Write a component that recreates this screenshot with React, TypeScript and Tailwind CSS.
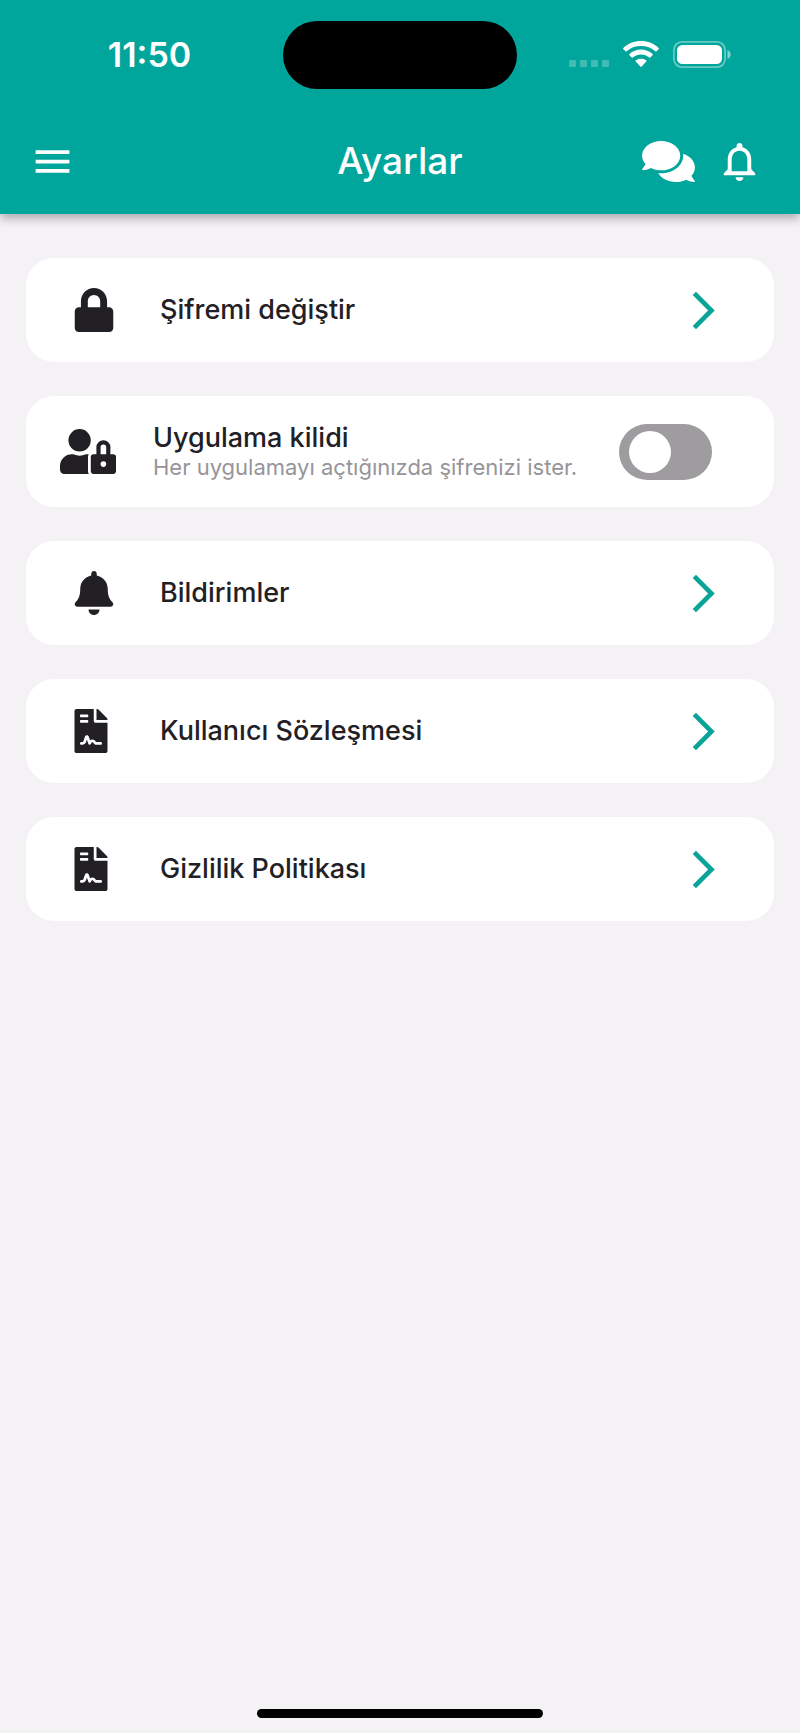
import { useState } from "react";
import type { ReactNode } from "react";
import { FaBell, FaComments, FaFileContract, FaLock, FaUserLock } from "react-icons/fa";
import { MdArrowForwardIos, MdMenu, MdNotificationsNone } from "react-icons/md";

interface LinkRowProps {
  icon: ReactNode;
  label: string;
}

interface SwitchRowProps extends LinkRowProps {
  hint: string;
}

function WifiIcon() {
  return (
    <svg viewBox="0 0 36 26" className="w-9 h-[26px]" fill="currentColor" aria-hidden="true">
      <path d="M18 0C11.2 0 5 2.600 0.400 6.900a0.900 0.900 0 0 0 0 1.300l2.100 2.100a0.900 0.900 0 0 0 1.200 0C7.500 6.900 12.500 5 18 5s10.500 1.900 14.300 5.300a0.900 0.900 0 0 0 1.200 0l2.100-2.100a0.900 0.900 0 0 0 0-1.300C31 2.600 24.800 0 18 0z" />
      <path d="M18 8.600c-4.400 0-8.400 1.600-11.500 4.400a0.900 0.900 0 0 0 0 1.300l2.200 2.200a0.900 0.900 0 0 0 1.200 0c2.200-1.900 5-3 8.100-3s5.900 1.100 8.100 3a0.900 0.900 0 0 0 1.200 0l2.200-2.200a0.900 0.900 0 0 0 0-1.300C26.400 10.200 22.400 8.600 18 8.600z" />
      <path d="M18 17.700c-2 0-3.900.6-5.200 1.600a0.900 0.900 0 0 0 0 1.300l4.500 4.900a0.900 0.900 0 0 0 1.400 0l4.500-4.900a0.900 0.900 0 0 0 0-1.300c-1.300-1-3.200-1.600-5.200-1.600z" />
    </svg>
  );
}

function BatteryIcon() {
  return (
    <svg viewBox="0 0 58 27" className="w-[58px] h-[27px]" fill="none" aria-hidden="true">
      <rect x="0.900" y="0.900" width="51.200" height="25.200" rx="8" stroke="white" strokeOpacity="0.400" strokeWidth="1.800" />
      <rect x="4" y="4" width="45" height="19" rx="5.500" fill="white" />
      <path d="M54.500 9v9c1.900-.8 3.200-2.500 3.200-4.500S56.400 9.800 54.500 9z" fill="white" fillOpacity="0.500" />
    </svg>
  );
}

function StatusBar() {
  return (
    <div className="h-[110px] grid grid-cols-[1fr_auto_1fr] items-center">
      <span className="pl-4 text-center text-[34px] leading-10 font-semibold">11:50</span>
      <div className="w-[234px] h-[68px] rounded-full bg-black" />
      <div className="flex items-center justify-end pr-[69px] pb-0.5">
        <div className="flex gap-[4px] pt-[18px] mr-[14px]">
          {[0, 1, 2, 3].map((dot) => (
            <span key={dot} className="size-[7px] rounded-[1px] bg-white/25" />
          ))}
        </div>
        <div className="flex items-center gap-[14px]">
          <WifiIcon />
          <BatteryIcon />
        </div>
      </div>
    </div>
  );
}

function Header() {
  return (
    <header className="bg-[#00a69c] text-white shadow-[0_4px_10px_rgba(0,0,0,0.32)]">
      <StatusBar />
      <div className="h-[104px] grid grid-cols-[1fr_auto_1fr] items-center pb-0.5">
        <button type="button" aria-label="Menü" className="justify-self-start ml-[30px]">
          <MdMenu className="size-[45px]" />
        </button>
        <h1 className="text-[37px] leading-10 font-medium">Ayarlar</h1>
        <div className="flex items-center justify-end gap-[21px] pr-[37px]">
          <button type="button" aria-label="Mesajlar">
            <FaComments className="w-[53px] h-[47px]" />
          </button>
          <button type="button" aria-label="Bildirimler">
            <MdNotificationsNone className="size-[47px]" />
          </button>
        </div>
      </div>
    </header>
  );
}

function LinkRow({ icon, label }: LinkRowProps) {
  return (
    <button
      type="button"
      className="w-full h-[104px] flex items-center px-12 rounded-[28px] bg-white text-left"
    >
      <span className="w-[86px] shrink-0">{icon}</span>
      <span className="flex-1 text-[27px] leading-[30px] font-medium">{label}</span>
      <MdArrowForwardIos className="size-[45px] text-[#0aa398]" />
    </button>
  );
}

function SwitchRow({ icon, label, hint }: SwitchRowProps) {
  const [enabled, setEnabled] = useState(false);

  return (
    <div className="w-full h-[111px] flex items-center pl-[34px] pr-[62px] rounded-[28px] bg-white">
      <span className="w-[93px] shrink-0">{icon}</span>
      <label htmlFor="app-lock" className="flex-1">
        <span className="block text-[27px] leading-[30px] font-medium">{label}</span>
        <span className="block text-[22px] leading-7 text-[#969499]">{hint}</span>
      </label>
      <input
        id="app-lock"
        type="checkbox"
        role="switch"
        checked={enabled}
        onChange={(e) => setEnabled(e.target.checked)}
        className="appearance-none w-[93px] h-14 shrink-0 py-[7px] px-[10px] rounded-full bg-[#9e9c9f] checked:bg-[#00a69c] before:block before:size-[42px] before:rounded-full before:bg-white checked:before:ml-auto"
      />
    </div>
  );
}

export default function App() {
  return (
    <div className="min-h-screen flex flex-col bg-[#f4f2f5] text-[#222024] font-['Inter',sans-serif]">
      <Header />

      <main className="flex-1 flex flex-col gap-[34px] px-[26px] pt-11">
        <LinkRow icon={<FaLock className="w-10 h-11" />} label="Şifremi değiştir" />
        <SwitchRow
          icon={<FaUserLock className="w-14 h-[45px]" />}
          label="Uygulama kilidi"
          hint="Her uygulamayı açtığınızda şifrenizi ister."
        />
        <LinkRow icon={<FaBell className="w-10 h-11" />} label="Bildirimler" />
        <LinkRow icon={<FaFileContract className="w-[34px] h-11" />} label="Kullanıcı Sözleşmesi" />
        <LinkRow icon={<FaFileContract className="w-[34px] h-11" />} label="Gizlilik Politikası" />
      </main>

      {/* Home indicator */}
      <div className="flex justify-center pb-[15px]">
        <div className="w-[286px] h-[9px] rounded-full bg-black" />
      </div>
    </div>
  );
}
